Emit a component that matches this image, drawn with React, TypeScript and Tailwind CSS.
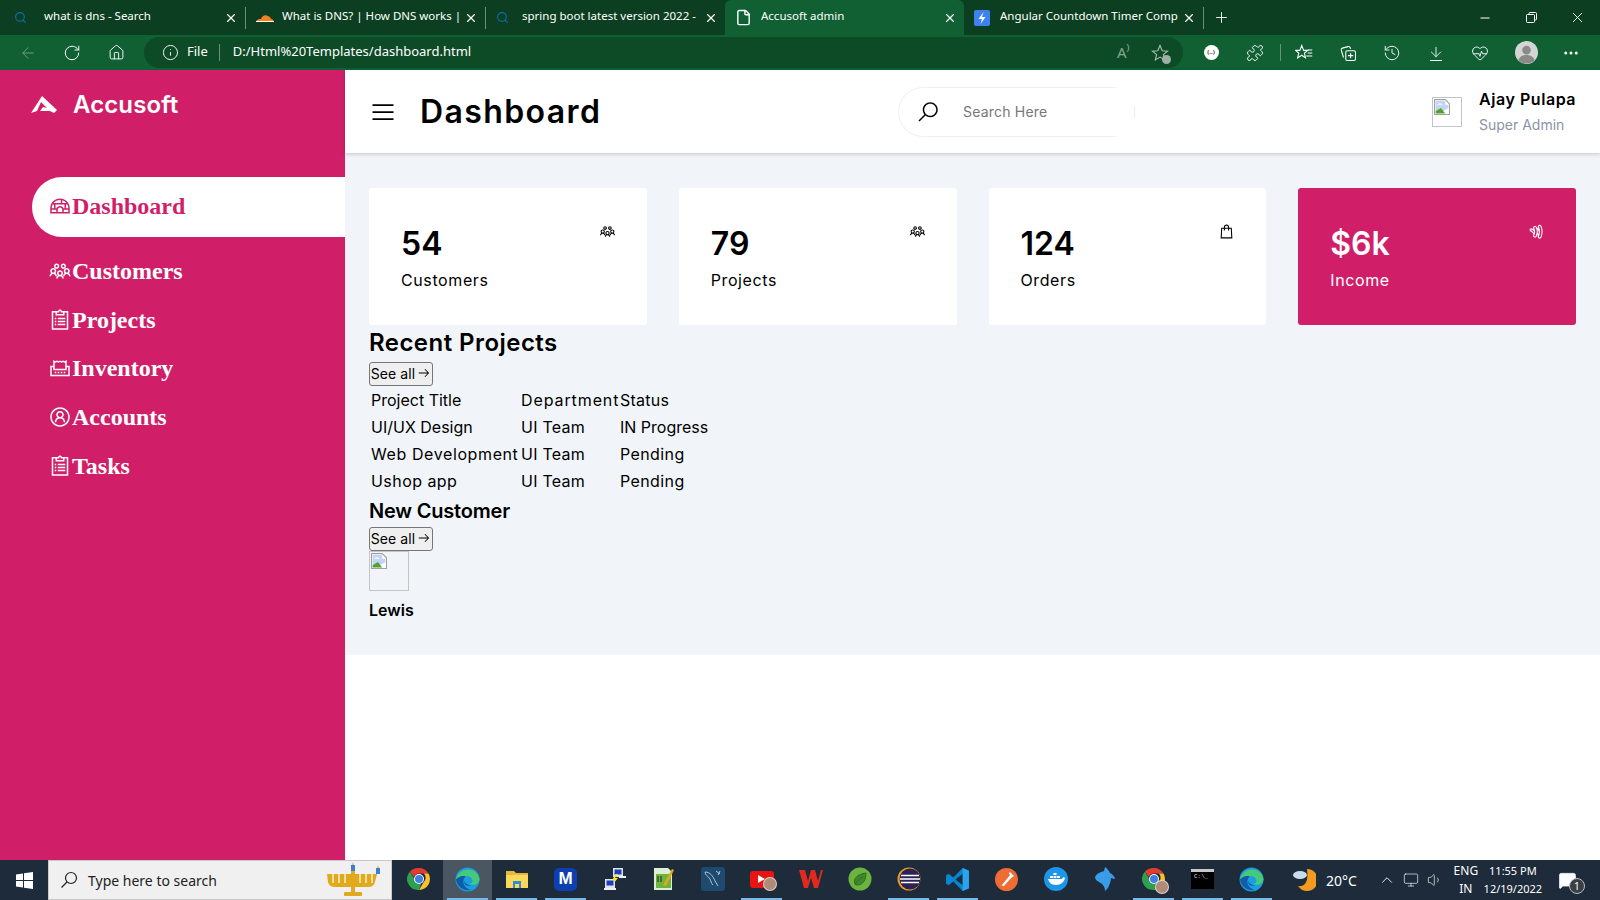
import React from "react";
import { ArrowLeft, RotateCw, Home, Info, X, Plus, Minus, Puzzle, ArrowDown, HeartPulse, History, MoreHorizontal, Search, ChevronUp, Volume1, Monitor, MessageSquare, File } from "lucide-react";
import { LiaIglooSolid, LiaUsersSolid, LiaClipboardListSolid, LiaReceiptSolid, LiaUserCircle, LiaShoppingBagSolid, LiaGoogleWallet, LiaBarsSolid, LiaSearchSolid, LiaArrowRightSolid } from "react-icons/lia";

const pop = "font-['Inter',sans-serif]";
const seg = "font-['Noto_Sans',sans-serif]";

function Broken({ cls }: { cls: string }) {
  return (
    <div className={`${cls} border border-[#c4c4c4] p-px shrink-0`}>
      <svg width="16" height="16" viewBox="0.5 0.5 15 15">
        <path d="M1 1h10l4 4v10H1z" fill="#fff" stroke="#a0a0a0" />
        <path d="M2 2h9v4h3v3L9 12H2z" fill="#c3d4f4" />
        <path d="M2 14v-2l5-3 4 5z" fill="#52a32e" />
        <path d="M3 6q3-3 6 0z" fill="#fff" />
      </svg>
    </div>
  );
}

function Tab({ title, icon, active, first }: { title: string; icon: React.ReactNode; active?: boolean; first?: boolean }) {
  return (
    <div className={`w-[239px] h-[35px] flex items-center shrink-0 pr-[7px] ${first ? "pl-[8px]" : "pl-[10px]"} ${active ? "bg-[#106034] rounded-t-[6px]" : ""}`}>
      <div className={`${first ? "w-[30px]" : "w-[26px]"} shrink-0 flex`}>{icon}</div>
      <span className={`${seg} text-[11.500px] text-white flex-1 whitespace-nowrap overflow-hidden -mt-[3px]`}>{title}</span>
      <X size={14} className="text-white ml-[2px] shrink-0" />
    </div>
  );
}

const Sep = () => <div className="w-px h-[22px] bg-[#6f8f7b] shrink-0" />;

function Lens() {
  return <Search size={13} className="text-[#0b6fb8]" />;
}

function Toolbtn({ children, w = "w-[44px]" }: { children: React.ReactNode; w?: string }) {
  return <div className={`${w} h-full flex items-center justify-center shrink-0`}>{children}</div>;
}

function ChromeIcon({ s = 24 }: { s?: number }) {
  return (
    <svg width={s} height={s} viewBox="0 0 24 24">
      <path d="M12 1a11 11 0 0 1 9.500 5.500H12a5.500 5.500 0 0 0-5.200 3.600L3 4.600A11 11 0 0 1 12 1z" fill="#e33b2e" />
      <path d="M21.500 6.500A11 11 0 0 1 12 23l4.700-8.100a5.500 5.500 0 0 0 0-8.400z" fill="#fbc02d" />
      <path d="M12 23A11 11 0 0 1 3 4.600l4.700 8.100a5.500 5.500 0 0 0 6.500 4.200z" fill="#2e9e4f" />
      <circle cx="12" cy="12" r="5" fill="#fff" />
      <circle cx="12" cy="12" r="4" fill="#3f7fe8" />
    </svg>
  );
}

function EdgeIcon() {
  return (
    <svg width="25" height="25" viewBox="0 0 24 24">
      <circle cx="12" cy="12" r="11.500" fill="#1b9de2" />
      <path d="M1 12A11.500 11.500 0 0 1 23.500 11c.3 4-3 6-6 6-2.500 0-4-1-4-1 3 0 4-2 3-4-1-3-5-4-8-3-3 1-5 2-7.500 3z" fill="#46c97a" />
      <path d="M8 14c0 4 3 7 7 8A11.500 11.500 0 0 1 1 12c2-3 6-4 9-3-1 1-2 3-2 5z" fill="#0f5ca8" />
      <path d="M9 13c0 3 3 4.500 6 4.500-1 .5-3 .5-4 0-1.500-.8-2.500-2.500-2-4.500z" fill="#0b3f84" />
    </svg>
  );
}

function Folder() {
  return (
    <svg width="24" height="24" viewBox="0 0 24 24">
      <path d="M1 4h8l2 2h12v15H1z" fill="#e8b83a" />
      <rect x="1" y="8" width="22" height="13" fill="#fbd75b" />
      <rect x="8" y="14" width="8" height="7" fill="#2a8fd6" />
      <rect x="10" y="17" width="4" height="4" fill="#fbd75b" />
    </svg>
  );
}

function TaskIcon({ children, on, hi }: { children: React.ReactNode; on?: boolean; hi?: boolean }) {
  return (
    <div className={`w-[49px] h-full shrink-0 flex flex-col ${hi ? "bg-[#4a5662]" : ""}`}>
      <div className="flex-1 flex items-center justify-center">{children}</div>
      <div className={`h-[2px] mx-[4px] ${on ? "bg-[#76b9ed]" : ""}`} />
    </div>
  );
}

const Badge = () => (
  <span className="absolute -bottom-[3px] -right-[3px] w-[14px] h-[14px] rounded-full bg-[#b08c78] border border-white/60" />
);

const nav = [
  { label: "Customers", Icon: LiaUsersSolid },
  { label: "Projects", Icon: LiaClipboardListSolid },
  { label: "Inventory", Icon: LiaReceiptSolid },
  { label: "Accounts", Icon: LiaUserCircle },
  { label: "Tasks", Icon: LiaClipboardListSolid },
];

const cards = [
  { n: "54", l: "Customers", Icon: LiaUsersSolid },
  { n: "79", l: "Projects", Icon: LiaUsersSolid },
  { n: "124", l: "Orders", Icon: LiaShoppingBagSolid },
  { n: "$6k", l: "Income", Icon: LiaGoogleWallet, pink: true },
];

const team = { t: "UI Team", c: "tracking-[0.25px]" };
const rows = [
  [{ t: "Project Title", c: "tracking-[0px]" }, { t: "Department", c: "tracking-[0.900px]" }, { t: "Status", c: "tracking-[0.250px]" }],
  [{ t: "UI/UX Design", c: "tracking-[0px]" }, team, { t: "IN Progress", c: "tracking-[0px]" }],
  [{ t: "Web Development", c: "tracking-[0.600px]" }, team, { t: "Pending", c: "tracking-[0.400px]" }],
  [{ t: "Ushop app", c: "tracking-[0.450px]" }, team, { t: "Pending", c: "tracking-[0.400px]" }],
];

function SeeAll() {
  return (
    <button className={`${pop} w-[64px] h-[24px] pb-[2px] border border-[#767676] rounded-[3px] bg-[#efefef] text-[14px] text-black flex items-center justify-center gap-[2px] whitespace-nowrap tracking-[0.1px]`}>
      See all <LiaArrowRightSolid size={14} />
    </button>
  );
}

export default function App() {
  return (
    <div className="w-[1600px] h-[900px] flex flex-col overflow-hidden bg-white">
      {/* tabs */}
      <div className="h-[35px] bg-[#0c3f22] flex items-center shrink-0">
        <div className="w-[6px]" />
        <Tab first title="what is dns - Search" icon={<Lens />} />
        <Sep />
        <Tab title="What is DNS? | How DNS works |" icon={<svg width="18" height="10" viewBox="0 0 18 10"><path d="M0 9c1-3 3-3 5-3 1-3 4-5 7-3 2 1 3 2 3 3 2 0 3 2 3 3z" fill="#f48120" /><rect y="8" width="18" height="1" fill="#fff" /></svg>} />
        <Sep />
        <Tab title="spring boot latest version 2022 -" icon={<Lens />} />
        <Tab title="Accusoft admin" icon={<File size={17} className="text-white" />} active />
        <Tab title="Angular Countdown Timer Comp" icon={<svg width="16" height="16" viewBox="0 0 16 16"><rect width="16" height="16" rx="2" fill="#3d83f0" /><path d="M9.500 2 4.500 9H8l-1.500 5 5-7H8z" fill="#fff" /></svg>} />
        <Sep />
        <div className="w-[34px] flex justify-center"><Plus size={17} className="text-white" strokeWidth={1.300} /></div>
        <div className="flex-1" />
        <Toolbtn w="w-[46px]"><Minus size={14} className="text-white" /></Toolbtn>
        <Toolbtn w="w-[46px]">
          <svg width="11" height="11" viewBox="0 0 11 11" fill="none" stroke="#fff"><rect x=".5" y="2.500" width="8" height="8" rx="1" /><path d="M3 2.500V1.500a1 1 0 0 1 1-1h5.500a1 1 0 0 1 1 1V7a1 1 0 0 1-1 1H8.500" /></svg>
        </Toolbtn>
        <Toolbtn w="w-[46px]"><X size={17} className="text-white" strokeWidth={1.300} /></Toolbtn>
      </div>

      {/* toolbar */}
      <div className="h-[35px] bg-[#106034] flex items-center shrink-0 pl-[6px]">
        <Toolbtn><ArrowLeft size={18} className="text-[#6f9c80]" strokeWidth={1.300} /></Toolbtn>
        <Toolbtn><RotateCw size={18} className="text-white" strokeWidth={1.300} /></Toolbtn>
        <Toolbtn><Home size={17} className="text-white" strokeWidth={1.300} /></Toolbtn>
        <div className="w-[1039px] h-[31px] bg-[#0d4b27] rounded-full flex items-center ml-[6px] shrink-0">
          <Info size={17} className="text-white ml-[18px]" strokeWidth={1.300} />
          <span className={`${seg} text-[13px] text-white ml-[8px] -mt-[2px]`}>File</span>
          <div className="w-px h-[17px] bg-[#6f8f7b] ml-[11px]" />
          <span className={`${seg} text-[13px] text-white ml-[13px] -mt-[2px]`}>D:/Html%20Templates/dashboard.html</span>
          <div className="flex-1" />
          <span className={`${seg} text-[15px] text-[#86a592] mr-[21px]`}>A⁾</span>
          <div className="relative mr-[14px]">
            <svg width="18" height="18" viewBox="0 0 24 24" fill="none" stroke="#a8bcae" strokeWidth="1.500"><path d="M12 2l3 7 7 .6-5.500 4.600 1.700 7-6.200-3.700-6.200 3.700 1.700-7L2 9.600 9 9z" /></svg>
            <span className="absolute -right-[2px] -bottom-[2px] w-[9px] h-[9px] rounded-full bg-[#9fb0a6]" />
          </div>
        </div>
        <div className="w-[6px]" />
        <Toolbtn>
          <div className="w-[15px] h-[15px] rounded-full bg-white flex items-center justify-center text-[6px] text-[#333] font-bold">(..)</div>
        </Toolbtn>
        <Toolbtn><Puzzle size={18} className="text-white" strokeWidth={1.200} /></Toolbtn>
        <div className="w-px h-[17px] bg-[#6f8f7b] ml-[3px] mr-px" />
        <Toolbtn>
          <svg width="18" height="18" viewBox="0 0 24 24" fill="none" stroke="#fff" strokeWidth="1.400"><path d="M9 2l2.500 6.500H17l-4.500 3.800 1.500 6.200L9 15l-5.500 3.500 1.500-6.200L1 8.500h5.500z" /><path d="M17 8h6M17 12h6M15 16h8" /></svg>
        </Toolbtn>
        <Toolbtn>
          <svg width="18" height="18" viewBox="0 0 24 24" fill="none" stroke="#fff" strokeWidth="1.400"><rect x="9" y="9" width="13" height="13" rx="2" /><path d="M15.500 12v7M12 15.500h7M6 18 3 8q-.5-2 1.500-2.500L12 3.500q2-.5 3 1.500l.5 1.500" /></svg>
        </Toolbtn>
        <Toolbtn><History size={18} className="text-white" strokeWidth={1.200} /></Toolbtn>
        <Toolbtn>
          <div className="flex flex-col items-center"><ArrowDown size={16} className="text-white" strokeWidth={1.300} /><div className="w-[12px] h-px bg-white" /></div>
        </Toolbtn>
        <Toolbtn><HeartPulse size={18} className="text-white" strokeWidth={1.200} /></Toolbtn>
        <Toolbtn w="w-[48px]">
          <svg width="23" height="23" viewBox="0 0 24 24"><circle cx="12" cy="12" r="12" fill="#d5d5d5" /><circle cx="12" cy="9.500" r="4.500" fill="#8a8a8a" /><path d="M3.500 20c1-4 5-5.500 8.500-5.500s7.500 1.500 8.500 5.500a12 12 0 0 1-17 0z" fill="#8a8a8a" /></svg>
        </Toolbtn>
        <Toolbtn w="w-[42px]"><MoreHorizontal size={18} className="text-white" /></Toolbtn>
      </div>

      {/* page */}
      <div className="h-[790px] flex shrink-0">
        <aside className="w-[345px] bg-[#d01f68] shrink-0 text-white">
          <div className="h-[107px] pt-[16px] pl-[31px] flex items-start gap-[16px]">
            <svg width="26" height="38" viewBox="0 0 26 20" className="shrink-0">
              <path d="M0 18 11 1l15 14-3 3-4-2H9l3-4 4 1-6-6-4 9z" fill="#fff" />
            </svg>
            <span className={`${pop} text-[24px] leading-[38px] font-semibold tracking-[0.1px]`}>Accusoft</span>
          </div>
          <ul className="font-['Liberation_Serif',serif] font-bold text-[24px]">
            <li className="ml-[32px] h-[60px] pl-[16px] pb-[2px] bg-white rounded-l-full text-[#d01f68] flex items-center mb-[10px]">
              <LiaIglooSolid size={24} />Dashboard
            </li>
            {nav.map(({ label, Icon }) => (
              <li key={label} className="ml-[32px] pl-[16px] h-[48.600px] flex items-center">
                <Icon size={24} />{label}
              </li>
            ))}
          </ul>
        </aside>

        <main className={`flex-1 ${pop}`}>
          <header className="h-[83px] bg-white shadow-[0_1px_4px_rgba(0,0,0,0.2)] relative flex items-center pl-[24px] pr-[24px]">
            <div className="w-[529px] flex items-center gap-[23px] shrink-0">
              <LiaBarsSolid size={28} />
              <h1 className="text-[32px] font-semibold tracking-[1.400px] text-black">Dashboard</h1>
            </div>
            <div className="w-[218px] h-[50px] rounded-l-full border-y border-l border-[#f0f0f0] flex items-center pl-[17px] shrink-0">
              <LiaSearchSolid size={24} className="text-black" />
              <span className="text-[14px] text-[#777] ml-[23px] tracking-[0.2px]">Search Here</span>
            </div>
            <div className="w-px h-[12px] bg-[#eee] ml-[18px]" />
            <div className="ml-auto w-[144px] flex items-center gap-[17px]">
              <Broken cls="w-[30px] h-[30px]" />
              <div className="whitespace-nowrap pt-[3px]">
                <div className="text-[16px] font-semibold text-black leading-[24px] -mt-[2px] tracking-[0.55px]">Ajay Pulapa</div>
                <div className="text-[14px] text-[#8a94a6] leading-[24px] mt-[2px]">Super Admin</div>
              </div>
            </div>
          </header>

          <section className="h-[502px] bg-[#f1f5f9] pt-[35px] px-[24px]">
            <div className="grid grid-cols-4 gap-[32px]">
              {cards.map(({ n, l, Icon, pink }) => (
                <div key={l} className={`h-[137px] rounded-[3px] pt-[32px] pl-[32px] pr-[31px] flex justify-between ${pink ? "bg-[#d01f68] text-white" : "bg-white text-black"}`}>
                  <div>
                    <div className="text-[32px] leading-[48px] font-semibold">{n}</div>
                    <div className="text-[16px] leading-[24px] tracking-[0.6px]">{l}</div>
                  </div>
                  <Icon size={17} className="mt-[3px]" />
                </div>
              ))}
            </div>

            <h2 className="text-[24px] leading-[36px] font-semibold text-black tracking-[0.45px]">Recent Projects</h2>
            <div className="mt-px"><SeeAll /></div>
            <table className="table-fixed w-[560px] -ml-px border-separate border-spacing-[2px] text-[16px] leading-[23px] text-black">
              <colgroup>
                <col className="w-[148px]" />
                <col className="w-[97px]" />
                <col />
              </colgroup>
              <tbody>
                {rows.map((r) => (
                  <tr key={r[0].t}>
                    {r.map((c) => (
                      <td key={c.t} className={`p-px whitespace-nowrap ${c.c}`}>{c.t}</td>
                    ))}
                  </tr>
                ))}
              </tbody>
            </table>
            <h3 className="text-[20px] leading-[30px] font-semibold text-black -tracking-[0.2px]">New Customer</h3>
            <div className="mt-px"><SeeAll /></div>
            <Broken cls="w-[40px] h-[40px]" />
            <div className="mt-[7px] text-[16px] leading-[24px] font-semibold text-black">Lewis</div>
          </section>
        </main>
      </div>

      {/* taskbar */}
      <div className="h-[40px] bg-[#1d2b3a] flex items-center shrink-0 text-white">
        <div className="w-[48px] h-full flex items-center justify-center shrink-0">
          <svg width="17" height="17" viewBox="0 0 17 17" fill="#fff"><path d="M0 2.500 7 1.500v6.500H0zM8 1.300 17 0v8H8zM0 9h7v6.500L0 14.500zM8 9h9v8l-9-1.300z" /></svg>
        </div>
        <div className="w-[344px] h-full bg-[#f0f0f0] border border-[#c8c8c8] flex items-center pl-[11px] shrink-0 text-[#222]">
          <svg width="18" height="18" viewBox="0 0 18 18" fill="none" stroke="#222" strokeWidth="1.200"><circle cx="11" cy="7" r="5.500" /><path d="M7 11 1.500 16.500" /></svg>
          <span className={`${seg} text-[14px] ml-[10px]`}>Type here to search</span>
          <div className="flex-1" />
          <svg width="60" height="36" viewBox="0 0 58 36" className="mr-[8px]">
            <g fill="#e0a91e">
              <path d="M3 12h50l-2 8q-1 5-7 5H11q-6 0-7-5z" />
              <rect x="27" y="8" width="4" height="22" />
              <rect x="20" y="30" width="18" height="4" rx="1" />
            </g>
            <g fill="#f0e0a0">
              <rect x="8" y="12" width="2" height="9" /><rect x="14" y="12" width="2" height="9" /><rect x="20" y="12" width="2" height="9" /><rect x="35" y="12" width="2" height="9" /><rect x="41" y="12" width="2" height="9" /><rect x="47" y="12" width="2" height="9" />
            </g>
            <rect x="27" y="3" width="4" height="6" fill="#3a7fd6" />
            <rect x="52" y="6" width="4" height="6" fill="#3a7fd6" />
            <path d="M29 0l1 3h-2zM54 3l1 3h-2z" fill="#f2b33d" />
          </svg>
        </div>
        <div className="w-[2px]" />
        <TaskIcon><ChromeIcon /></TaskIcon>
        <TaskIcon on hi><EdgeIcon /></TaskIcon>
        <TaskIcon on><Folder /></TaskIcon>
        <TaskIcon on><div className="w-[23px] h-[23px] rounded-[5px] bg-[#0d3fb0] flex items-center justify-center text-white font-bold text-[17px] font-['Liberation_Sans',sans-serif]">M</div></TaskIcon>
        <TaskIcon>
          <svg width="24" height="24" viewBox="0 0 24 24"><rect x="10" y="1" width="10" height="9" fill="#dfe4ea" /><rect x="11.500" y="2.500" width="7" height="5" fill="#1d3fb8" /><rect x="2" y="12" width="10" height="9" fill="#dfe4ea" /><rect x="3.500" y="13.500" width="7" height="5" fill="#1d3fb8" /><rect x="1" y="21" width="12" height="2" fill="#f0f0f0" /><rect x="16" y="9" width="7" height="2" fill="#f0f0f0" /><path d="M13 7 9 13h3l-2 4 5-6h-3l3-4z" fill="#ffe71f" /></svg>
        </TaskIcon>
        <TaskIcon>
          <svg width="22" height="24" viewBox="0 0 22 24"><path d="M1 1h14l4 4v18H1z" fill="#dfeed2" /><rect x="3" y="7" width="15" height="14" fill="#6cb33f" /><path d="M5 9v6M8 9v6" stroke="#222" /><path d="M10 18 19 2l2 1-8 16z" fill="#e0a91e" /></svg>
        </TaskIcon>
        <TaskIcon>
          <div className="w-[24px] h-[24px] rounded-[3px] bg-[#1d4a6e] flex items-center justify-center">
            <svg width="20" height="20" viewBox="0 0 20 20" fill="none" stroke="#a9c4d8" strokeWidth="1"><path d="M2 3c5 0 8 4 10 9l3 5M2 3c0 3 3 4 5 7 1 2 1 4 3 6M13 2l4 3M17 2l-2 4" /></svg>
          </div>
        </TaskIcon>
        <TaskIcon on>
          <div className="relative"><div className="w-[24px] h-[17px] bg-[#e81313] rounded-[3px] flex items-center justify-center"><div className="w-0 h-0 border-y-[4px] border-y-transparent border-l-[7px] border-l-white" /></div><Badge /></div>
        </TaskIcon>
        <TaskIcon>
          <svg width="24" height="20" viewBox="0 0 24 20"><path d="M0 1h6l3 11 3-11h4l3 11 3-11h2l-5 18h-4L12 9l-3 10H5z" fill="#e02a20" /></svg>
        </TaskIcon>
        <TaskIcon>
          <svg width="24" height="24" viewBox="0 0 24 24"><circle cx="12" cy="12" r="11.500" fill="#6db33f" /><path d="M7 17c-2-5 2-10 11-11 0 7-3 12-9 12q-2 0-2-1zM7 17c2-3 5-6 8-7" fill="#3f8a2a" stroke="#2d6d1e" /></svg>
        </TaskIcon>
        <TaskIcon on>
          <svg width="24" height="24" viewBox="0 0 24 24"><circle cx="12" cy="12" r="11.500" fill="#e89a27" /><circle cx="13" cy="12" r="10.500" fill="#2c2255" /><path d="M4 8.500h18M3 12h20M4 15.500h18" stroke="#fff" strokeWidth="1.600" /></svg>
        </TaskIcon>
        <TaskIcon on>
          <svg width="25" height="25" viewBox="0 0 24 24"><path d="M17 1 8 10 3.500 6.500 1 8v8l2.500 1.500L8 14l9 9 6-2.500v-17z" fill="#0a86d1" /><path d="M17 6.500 10 12l7 5.500z" fill="#1d2b3a" /><path d="M17 1l6 2.500v17L17 23z" fill="#2aa4ec" /></svg>
        </TaskIcon>
        <TaskIcon>
          <svg width="23" height="23" viewBox="0 0 24 24"><circle cx="12" cy="12" r="12" fill="#ef6c35" /><path d="M7 18 16 7l2 2L9 19z" fill="#fff" /><path d="M15 5l4 4" stroke="#fff" strokeWidth="2" /></svg>
        </TaskIcon>
        <TaskIcon>
          <svg width="24" height="24" viewBox="0 0 24 24"><circle cx="12" cy="12" r="12" fill="#1d95e8" /><path d="M4 12h14c1-2 2-2 3-1-1 4-4 7-9 7-5 0-7-3-8-6z" fill="#fff" /><path d="M6 9h3v2H6zM9.500 9h3v2h-3zM13 9h3v2h-3zM9.500 6h3v2h-3z" fill="#fff" /></svg>
        </TaskIcon>
        <TaskIcon>
          <svg width="22" height="26" viewBox="0 0 22 26"><path d="M11 1c2 1 4 4 5 6 4 2 5 5 5 6-2 0-3-1-4-1 0 4-2 7-3 10l-3 3c0-3-1-5-3-7-2-2-7-3-7-7 2-4 6-5 9-6z" fill="#3a9be8" /></svg>
        </TaskIcon>
        <TaskIcon on>
          <div className="relative"><ChromeIcon /><Badge /></div>
        </TaskIcon>
        <TaskIcon on>
          <div className="w-[23px] h-[20px] bg-black border-t-[3px] border-[#c9c9c9] pl-[3px] pt-[2px] text-[6px] leading-none font-['Liberation_Mono',monospace] text-[#ddd]">C:\_</div>
        </TaskIcon>
        <TaskIcon on><EdgeIcon /></TaskIcon>
        <div className="w-[28px] ml-[14px] flex justify-center shrink-0">
          <svg width="24" height="24" viewBox="0 0 24 24"><path d="M15 1a11 11 0 0 1 0 22 11 11 0 0 1-9-5c6 1 11-3 9-17z" fill="#f39b1f" /><ellipse cx="8" cy="7" rx="7" ry="4" fill="#c9dcef" /></svg>
        </div>
        <span className={`${seg} text-[14px] ml-[8px] whitespace-nowrap`}>20°C</span>
        <ChevronUp size={18} strokeWidth={1.200} className="ml-[21px] shrink-0" />
        <Monitor size={16} strokeWidth={1} className="ml-[7px] shrink-0" />
        <Volume1 size={16} strokeWidth={1} className="ml-[8px] shrink-0" />
        <div className={`${seg} text-[12px] leading-[18px] w-[30px] text-center ml-[8px] shrink-0`}><div>ENG</div><div>IN</div></div>
        <div className={`${seg} text-[11px] leading-[18px] w-[62px] text-center ml-[1px] shrink-0 whitespace-nowrap`}><div>11:55 PM</div><div>12/19/2022</div></div>
        <div className="relative ml-[14px] shrink-0">
          <MessageSquare size={19} fill="#fff" strokeWidth={1} />
          <span className={`absolute -right-[8px] -bottom-[4px] w-[16px] h-[16px] rounded-full bg-[#3a3f45] border border-[#bbb] text-[10px] leading-[14px] text-center ${seg}`}>1</span>
        </div>
      </div>
    </div>
  );
}
